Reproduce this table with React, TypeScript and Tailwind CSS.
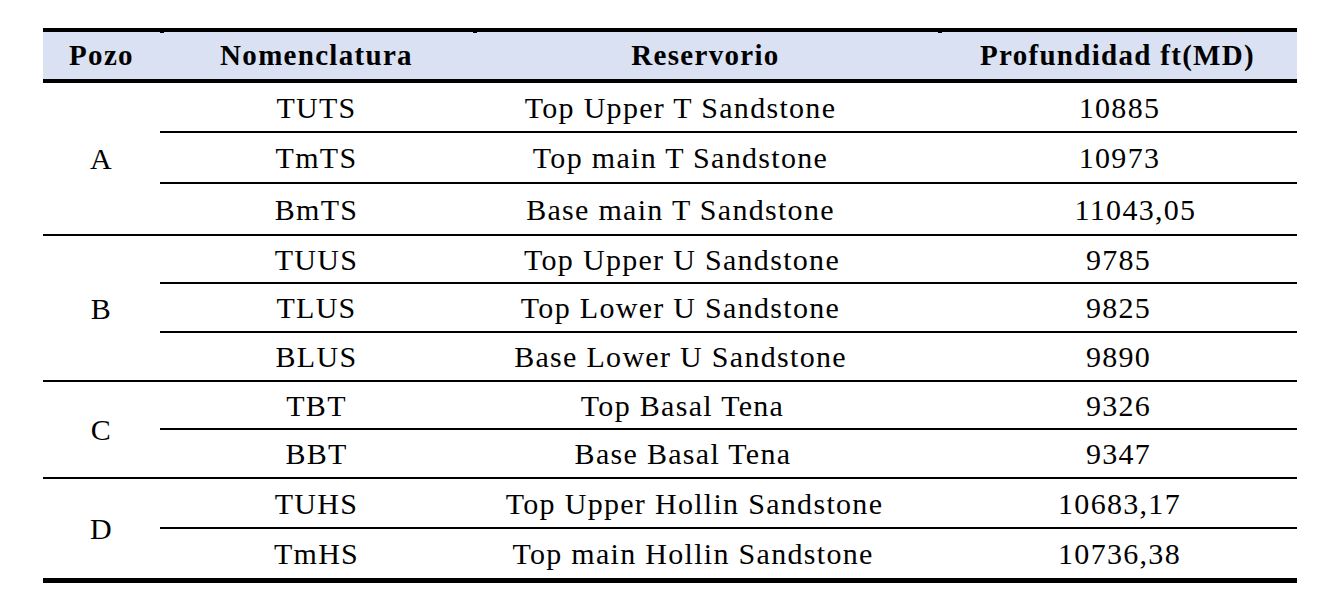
import React from "react";

type Row = { nom: string; res: string; prof: string; h: string; rp: string; pp: string };
type Group = { pozo: string; rows: Row[] };

const groups: Group[] = [
  {
    pozo: "A",
    rows: [
      { nom: "TUTS", res: "Top Upper T Sandstone", prof: "10885", h: "h-[48px]", rp: "pr-[50px]", pp: "pl-[4px]" },
      { nom: "TmTS", res: "Top main T Sandstone", prof: "10973", h: "h-[49px]", rp: "pr-[50px]", pp: "pl-[4px]" },
      { nom: "BmTS", res: "Base main T Sandstone", prof: "11043,05", h: "h-[50px]", rp: "pr-[50px]", pp: "pl-[36px]" },
    ],
  },
  {
    pozo: "B",
    rows: [
      { nom: "TUUS", res: "Top Upper U Sandstone", prof: "9785", h: "h-[46px]", rp: "pr-[47px]", pp: "pl-[2px]" },
      { nom: "TLUS", res: "Top Lower U Sandstone", prof: "9825", h: "h-[47px]", rp: "pr-[50px]", pp: "pl-[2px]" },
      { nom: "BLUS", res: "Base Lower U Sandstone", prof: "9890", h: "h-[47px]", rp: "pr-[50px]", pp: "pl-[2px]" },
    ],
  },
  {
    pozo: "C",
    rows: [
      { nom: "TBT", res: "Top Basal Tena", prof: "9326", h: "h-[46px]", rp: "pr-[46px]", pp: "pl-[2px]" },
      { nom: "BBT", res: "Base Basal Tena", prof: "9347", h: "h-[47px]", rp: "pr-[45px]", pp: "pl-[2px]" },
    ],
  },
  {
    pozo: "D",
    rows: [
      { nom: "TUHS", res: "Top Upper Hollin Sandstone", prof: "10683,17", h: "h-[48px]", rp: "pr-[22px]", pp: "pl-[4px]" },
      { nom: "TmHS", res: "Top main Hollin Sandstone", prof: "10736,38", h: "h-[49px]", rp: "pr-[25px]", pp: "pl-[4px]" },
    ],
  },
];

const font = "font-['Liberation_Serif','Times_New_Roman',serif]";

export default function App() {
  return (
    <div className={`min-h-[607px] w-[1339px] bg-white pt-[28px] pl-[43px] text-black ${font}`}>
      <div className="w-[1254px]">
        {/* Header */}
        <div className="grid grid-cols-[117px_313px_465px_359px] h-[55px] border-t-4 border-b-4 border-black bg-[#d9e1f2] text-[29px] font-bold tracking-[1.3px]">
          <div className="relative flex items-center justify-center">Pozo</div>
          <div className="relative flex items-center justify-center">
            <span className="absolute left-0 top-0 h-[1px] w-[4px] bg-black" />
            Nomenclatura
          </div>
          <div className="relative flex items-center justify-center">
            <span className="absolute left-0 top-0 h-[1px] w-[4px] bg-black" />
            Reservorio
          </div>
          <div className="relative flex items-center justify-center">
            <span className="absolute left-0 top-0 h-[1px] w-[4px] bg-black" />
            Profundidad ft(MD)
          </div>
        </div>

        {/* Body */}
        {groups.map((g, gi) => (
          <div
            key={g.pozo}
            className={`flex border-black text-[30px] tracking-[1.3px] ${
              gi === groups.length - 1 ? "border-b-[5px]" : "border-b-2"
            }`}
          >
            <div className="flex w-[117px] items-center justify-center">{g.pozo}</div>
            <div className="flex flex-col">
              {g.rows.map((r, ri) => (
                <div
                  key={r.nom}
                  className={`grid grid-cols-[313px_465px_359px] border-black ${r.h} ${
                    ri === g.rows.length - 1 ? "" : "box-content border-b-2"
                  }`}
                >
                  <div className="flex items-center justify-center">{r.nom}</div>
                  <div className={`flex items-center justify-center ${r.rp}`}>{r.res}</div>
                  <div className={`flex items-center justify-center ${r.pp}`}>{r.prof}</div>
                </div>
              ))}
            </div>
          </div>
        ))}
      </div>
    </div>
  );
}
